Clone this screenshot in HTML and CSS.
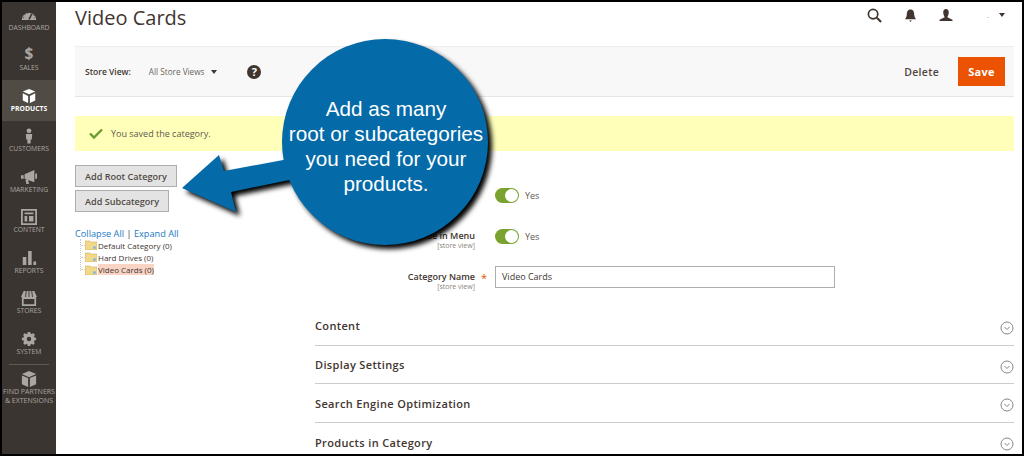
FILE: index.html
```html
<!DOCTYPE html>
<html lang="en">
<head>
<meta charset="utf-8">
<title>Video Cards</title>
<link rel="stylesheet" href="styles.css">
</head>
<body>
<div class="frame">
  <nav class="sidebar">
    <div class="nav-item">
      <svg class="nav-icon" viewBox="0 0 20 16"><path d="M2 13.500a8 8 0 0 1 16 0z" fill="#aaa6a2"/><path d="M10 13l3-6" stroke="#3a3530" stroke-width="1.800"/><path d="M4 11.500a6 6 0 0 1 12 0" fill="none" stroke="#3a3530" stroke-width="1" stroke-dasharray="1.500 2"/></svg>
      <span>DASHBOARD</span>
    </div>
    <div class="nav-item">
      <span class="nav-glyph">$</span>
      <span>SALES</span>
    </div>
    <div class="nav-item active">
      <svg class="nav-icon" viewBox="0 0 20 18"><path d="M10 1l7 3-7 3-7-3z" fill="#fff"/><path d="M3 6l6 3v8l-6-3zM17 6l-6 3v8l6-3z" fill="#fff"/></svg>
      <span>PRODUCTS</span>
    </div>
    <div class="nav-item">
      <svg class="nav-icon" viewBox="0 0 20 20"><circle cx="10" cy="3.500" r="3" fill="#aaa6a2"/><path d="M6 7.500h8l-.5 7h-1.500v5h-4v-5h-1.500z" fill="#aaa6a2"/></svg>
      <span>CUSTOMERS</span>
    </div>
    <div class="nav-item">
      <svg class="nav-icon" viewBox="0 0 20 18"><path d="M1 7h3v4H1zM5 6l11-5v14L5 11zM17 5h2v6h-2zM6 12h3l1 5H7z" fill="#aaa6a2"/></svg>
      <span>MARKETING</span>
    </div>
    <div class="nav-item">
      <svg class="nav-icon" viewBox="0 0 18 18"><path d="M1 1h16v16H1z" fill="none" stroke="#aaa6a2" stroke-width="2"/><path d="M4 4h10v2H4zM4 8h3v6H4zM9 8h5v6H9z" fill="#aaa6a2"/></svg>
      <span>CONTENT</span>
    </div>
    <div class="nav-item">
      <svg class="nav-icon" viewBox="0 0 18 18"><path d="M2 8h4v9H2zM8 1h4v16H8zM14 13h3v4h-3z" fill="#aaa6a2"/></svg>
      <span>REPORTS</span>
    </div>
    <div class="nav-item">
      <svg class="nav-icon" viewBox="0 0 20 18"><path d="M4 1h12l3 7H1z" fill="#aaa6a2"/><path d="M7 1L6 8M10 1v7M13 1l1 7" stroke="#3a3530"/><path d="M3 9h14v8H3z" fill="none" stroke="#aaa6a2" stroke-width="2"/></svg>
      <span>STORES</span>
    </div>
    <div class="nav-item">
      <svg class="nav-icon" viewBox="0 0 18 18"><circle cx="9" cy="9" r="4.500" fill="none" stroke="#aaa6a2" stroke-width="4"/><path d="M9 1v16M1 9h16M3.300 3.300l11.400 11.400M14.700 3.300L3.300 14.700" stroke="#aaa6a2" stroke-width="3" stroke-dasharray="3 10"/></svg>
      <span>SYSTEM</span>
    </div>
    <div class="nav-rule"></div>
    <div class="nav-item partners">
      <svg class="nav-icon" viewBox="0 0 20 18"><path d="M10 0l8 3.500-8 3.500-8-3.500z" fill="#aaa6a2"/><path d="M2 5l7 3v10l-7-3zM18 5l-7 3v10l7-3z" fill="#aaa6a2"/></svg>
      <span>FIND PARTNERS<br>&amp; EXTENSIONS</span>
    </div>
  </nav>

  <main class="main">
    <header class="topbar">
      <h1>Video Cards</h1>
      <div class="top-icons">
        <svg class="ti" viewBox="0 0 16 16"><circle cx="6.500" cy="6.500" r="5" fill="none" stroke="#41362f" stroke-width="1.800"/><path d="M10.500 10.500l4.500 4.500" stroke="#41362f" stroke-width="2.200"/></svg>
        <svg class="ti bell" viewBox="0 0 12 14"><path d="M6 0.500c3 0 4 2.500 4 5 0 3 2 5 2 5.500H0c0-.5 2-2.500 2-5.500 0-2.500 1-5 4-5zM4.500 12.500h3L6 14z" fill="#41362f"/></svg>
        <svg class="ti user" viewBox="0 0 14 14"><path d="M7 0c2 0 3 1.500 3 3.500S9 8 8.500 8.500V9L14 11.500V13H0v-1.500L5.500 9v-.5C5 8 4 5.500 4 3.500S5 0 7 0z" fill="#41362f"/></svg>
        <span class="ti-dash">-</span>
        <span class="caret"></span>
      </div>
    </header>

    <section class="actions">
      <span class="sv-label">Store View:</span>
      <span class="sv-value">All Store Views</span>
      <span class="caret sv-caret"></span>
      <span class="help">?</span>
      <span class="delete">Delete</span>
      <button class="save">Save</button>
    </section>

    <section class="message">
      <svg class="check" viewBox="0 0 14 11"><path d="M1 5.500l4 4 8-8" fill="none" stroke="#6b9a30" stroke-width="2.400"/></svg>
      <span>You saved the category.</span>
    </section>

    <div class="columns">
      <aside class="tree-col">
        <button class="gray-btn">Add Root Category</button>
        <button class="gray-btn">Add Subcategory</button>
        <div class="tree-links"><a>Collapse All</a> <span class="sep">|</span> <a>Expand All</a></div>
        <ul class="tree">
          <li><svg class="folder" viewBox="0 0 12 10"><path d="M0 1h5l1 1h6v8H0z" fill="#f2d98a" stroke="#d0b060" stroke-width=".6"/><circle cx="9.500" cy="7.500" r="1.500" fill="#8eb4d8"/></svg><span>Default Category (0)</span></li>
          <li><svg class="folder" viewBox="0 0 12 10"><path d="M0 1h5l1 1h6v8H0z" fill="#f2d98a" stroke="#d0b060" stroke-width=".6"/><circle cx="9.500" cy="7.500" r="1.500" fill="#8eb4d8"/></svg><span>Hard Drives (0)</span></li>
          <li><svg class="folder" viewBox="0 0 12 10"><path d="M0 1h5l1 1h6v8H0z" fill="#f2d98a" stroke="#d0b060" stroke-width=".6"/><circle cx="9.500" cy="7.500" r="1.500" fill="#8eb4d8"/></svg><span class="selected">Video Cards (0)</span></li>
        </ul>
      </aside>

      <div class="form-col">
        <div class="form-row first">
          <div class="label"></div>
          <span class="toggle"></span><span class="yes">Yes</span>
        </div>
        <div class="form-row second">
          <div class="label"><b>Include in Menu</b><small>[store view]</small></div>
          <span class="toggle"></span><span class="yes">Yes</span>
        </div>
        <div class="form-row third">
          <div class="label"><b>Category Name</b><small>[store view]</small></div>
          <span class="required">*</span>
          <div class="name-input">Video Cards</div>
        </div>
        <div class="panels">
          <div class="panel"><span>Content</span><svg class="chev" viewBox="0 0 14 14"><circle cx="7" cy="7" r="6" fill="none" stroke="#8a8580"/><path d="M4.500 6l2.500 2.500L9.500 6" fill="none" stroke="#8a8580"/></svg></div>
          <div class="panel"><span>Display Settings</span><svg class="chev" viewBox="0 0 14 14"><circle cx="7" cy="7" r="6" fill="none" stroke="#8a8580"/><path d="M4.500 6l2.500 2.500L9.500 6" fill="none" stroke="#8a8580"/></svg></div>
          <div class="panel"><span>Search Engine Optimization</span><svg class="chev" viewBox="0 0 14 14"><circle cx="7" cy="7" r="6" fill="none" stroke="#8a8580"/><path d="M4.500 6l2.500 2.500L9.500 6" fill="none" stroke="#8a8580"/></svg></div>
          <div class="panel last"><span>Products in Category</span><svg class="chev" viewBox="0 0 14 14"><circle cx="7" cy="7" r="6" fill="none" stroke="#8a8580"/><path d="M4.500 6l2.500 2.500L9.500 6" fill="none" stroke="#8a8580"/></svg></div>
        </div>
      </div>
    </div>
  </main>

  <div class="callout">
    <svg class="callout-art" viewBox="0 0 330 220">
      <defs><filter id="sh" x="-10%" y="-10%" width="125%" height="125%"><feGaussianBlur stdDeviation="2.500"/></filter></defs>
      <g transform="translate(4 4)" fill="#000" filter="url(#sh)">
        <circle cx="206" cy="104" r="103"/>
        <path d="M3 150L40 117 45 133 115 120 120 140 52 154 57 174z"/>
      </g>
      <path d="M3 150L40 117 45 133 115 120 120 140 52 154 57 174z" fill="#046aa8"/>
      <circle cx="206" cy="104" r="103" fill="#046aa8"/>
    </svg>
    <p class="callout-text">Add as many<br>root or subcategories<br>you need for your<br>products.</p>
  </div>
</div>
</body>
</html>
```
FILE: styles.css
```css
* { box-sizing: border-box; }
html, body { margin: 0; height: 100%; }
body { font-family: "Open Sans", "Liberation Sans", sans-serif; background: #fff; color: #41362f; overflow: hidden; }
.frame { position: relative; display: flex; width: 1024px; height: 456px; border: 2px solid #000; overflow: hidden; }

.sidebar { width: 54px; flex: none; height: 100%; background: #3a3530; display: flex; flex-direction: column; }
.nav-item { height: 40.500px; display: flex; flex-direction: column; align-items: center; justify-content: flex-end; color: #aaa6a2; font-size: 6.800px; line-height: 9px; padding-bottom: 8px; text-align: center; flex: none; }
.nav-item:first-child { height: 37.500px; }
.nav-item.active { background: #514b46; color: #fff; font-weight: 700; }
.nav-icon { width: 18px; height: 16px; }
.nav-glyph { font-size: 15.500px; line-height: 16px; font-weight: 700; color: #aaa6a2; margin-bottom: 2px; }
.nav-rule { height: 1px; width: 40px; background: #5f5954; margin: 0 auto; flex: none; }
.partners { height: 44px; justify-content: flex-start; padding-top: 6px; padding-bottom: 0; white-space: nowrap; font-size: 7px; }

.main { flex: 1; min-width: 0; padding: 0 8px 0 19px; }
.topbar { height: 44px; display: flex; justify-content: space-between; align-items: flex-start; }
h1 { margin: 2px 0 0; font-size: 20px; line-height: 28px; font-weight: 400; color: #41362f; }
.top-icons { display: flex; align-items: center; height: 26px; }
.ti { width: 15px; height: 15px; }
.bell { width: 11px; height: 13px; margin-left: 23px; }
.user { width: 14px; height: 13px; margin-left: 23px; }
.ti-dash { font-size: 8px; color: #aaa; margin-left: 33px; }
.top-icons .caret { margin: 0 9px 0 10px; }
.caret { display: inline-block; width: 0; height: 0; border-left: 3px solid transparent; border-right: 3px solid transparent; border-top: 4px solid #41362f; }

.actions { height: 51px; background: #f8f8f8; border-top: 1px solid #eee; border-bottom: 1px solid #e5e5e5; display: flex; align-items: center; padding: 0 9px 0 10px; font-size: 8.500px; }
.sv-label { font-weight: 600; font-size: 8.500px; color: #41362f; }
.sv-value { margin-left: 18px; color: #6b6560; font-size: 8.200px; }
.sv-caret { margin-left: 7px; }
.help { width: 14px; height: 14px; border-radius: 50%; background: #41362f; color: #fff; font-size: 11px; font-weight: 700; line-height: 14px; text-align: center; margin-left: 30px; }
.delete { margin-left: auto; margin-right: 19px; font-size: 10.500px; font-weight: 600; letter-spacing: .3px; color: #4f4640; }
.save { width: 47px; height: 29px; background: #eb5202; color: #fff; border: 0; font: 700 11px "Open Sans", sans-serif; letter-spacing: .2px; padding: 0; }

.message { height: 35px; margin-top: 19px; background: #ffffb9; display: flex; align-items: center; padding-left: 14px; font-size: 9px; color: #5f5850; }
.check { width: 14px; height: 11px; margin-right: 8px; }

.columns { display: flex; }
.tree-col { width: 240px; flex: none; padding-top: 14px; display: flex; flex-direction: column; align-items: flex-start; }
.gray-btn { height: 22px; padding: 0 9px; background: #e3e3e3; border: 1px solid #adadad; font: 600 9.100px "Open Sans", sans-serif; color: #514943; margin-bottom: 3px; }
.tree-links { margin-top: 13px; font-size: 9.200px; line-height: 11px; color: #1979c3; }
.sep { color: #41362f; }
ul.tree { list-style: none; margin: 0 0 0 5px; padding: 0; font-size: 8px; color: #41362f; border-left: 1px dotted #ccc; height: 32px; }
.tree li { display: flex; align-items: center; height: 12.300px; }
.tree li::before { content: ""; width: 4px; border-top: 1px dotted #ccc; flex: none; }
.folder { width: 12px; height: 10px; margin-right: 1px; }
.selected { background: #f9d4c5; }

.form-col { flex: 1; min-width: 0; }
.form-row { display: flex; align-items: center; height: 16px; position: relative; }
.form-row.first { margin-top: 36px; }
.form-row.second { margin-top: 25px; }
.form-row.third { margin-top: 22px; height: 22px; }
.label { width: 160px; text-align: right; flex: none; font-size: 9px; line-height: 11px; color: #41362f; padding-top: 7px; }
.label b { display: block; font-weight: 600; }
.label small { display: block; font-size: 7px; line-height: 9px; color: #8a8580; }
.required { position: absolute; left: 166px; top: 5px; font-size: 11px; line-height: 14px; color: #eb5202; }
.toggle { position: relative; margin-left: 20px; width: 24px; height: 15px; border-radius: 8px; background: #79a22e; flex: none; }
.toggle::after { content: ""; position: absolute; right: 1px; top: 1px; width: 13px; height: 13px; border-radius: 50%; background: #fff; }
.yes { margin-left: 6px; font-size: 9px; color: #5f5850; }
.name-input { margin-left: 20px; width: 340px; height: 22px; border: 1px solid #adadad; padding-left: 6px; font-size: 9px; line-height: 20px; color: #41362f; }

.panels { margin-top: 19px; }
.panel { display: flex; justify-content: space-between; align-items: center; height: 38.700px; border-bottom: 1px solid #ccc; font-size: 11px; font-weight: 600; letter-spacing: .35px; color: #41362f; }
.panel.last { border-bottom: 0; }
.chev { width: 14px; height: 14px; margin-top: 4px; }

.callout { position: absolute; left: 177px; top: 36px; width: 330px; height: 220px; }
.callout-art { display: block; width: 330px; height: 220px; }
.callout-text { position: absolute; left: 95px; top: 58px; width: 224px; margin: 0; text-align: center; font-family: "Liberation Sans", Arial, sans-serif; font-size: 20.700px; line-height: 25px; color: #fff; }
```
